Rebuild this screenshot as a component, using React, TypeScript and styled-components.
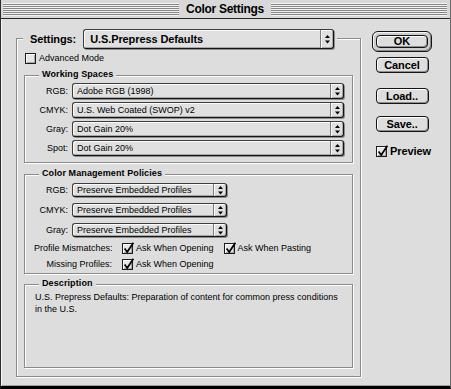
import React from "react";
import styled, { createGlobalStyle } from "styled-components";

const Global = createGlobalStyle`
  html, body { margin: 0; padding: 0; background: #dddddd; }
  body { font-family: "Liberation Sans", Arial, sans-serif; color: #000; }
  * { box-sizing: border-box; }
`;

const SANS = `"Liberation Sans", Arial, sans-serif`;

const Window = styled.div`
  width: 451px;
  height: 389px;
  background: #dddddd;
  border-left: 1px solid #2c2c2c;
  border-right: 1px solid #6a6a6a;
  border-bottom: 3px solid #000;
  box-shadow: inset 1px 0 0 #f8f8f8, inset 0 -1px 0 #a0a0a0;
  display: flex;
  flex-direction: column;
  overflow: hidden;
`;

const TitleBar = styled.div`
  height: 19px;
  flex: none;
  display: flex;
  align-items: center;
  padding: 0 3px 0 2px;
  border-bottom: 1px solid #262626;
  background: #d8d8d8;
`;

const Stripes = styled.div`
  flex: 1;
  height: 13px;
  background: repeating-linear-gradient(
    to bottom,
    #f4f4f4 0px,
    #f4f4f4 1px,
    #858585 1px,
    #858585 2px
  );
`;

const TitleText = styled.div`
  padding: 0 7px;
  font: bold 12px/14px ${SANS};
  letter-spacing: -0.3px;
`;

const Body = styled.div`
  flex: 1;
  display: flex;
  align-items: flex-start;
  padding: 12px 0 0 15px;
  gap: 11px;
`;

const SettingsBox = styled.div`
  width: 345px;
  height: 339px;
  margin-top: 7px;
  border: 1px solid #8a8a8a;
  box-shadow: inset 1px 1px 0 #ffffff, 1px 1px 0 #ffffff;
  padding: 0 7px 8px 7px;
  display: flex;
  flex-direction: column;
`;

const SettingsHeader = styled.div`
  align-self: flex-start;
  display: flex;
  align-items: center;
  gap: 7px;
  height: 20px;
  margin: -10px 0 0 -1px;
  padding: 0 3px 0 7px;
  background: #dddddd;
`;

const BigLabel = styled.span`
  font: bold 11px/13px ${SANS};
  letter-spacing: -0.1px;
  white-space: nowrap;
`;

const Popup = styled.div<{ $w?: number; $h: number }>`
  width: ${(p) => (p.$w ? `${p.$w}px` : "auto")};
  height: ${(p) => p.$h}px;
  display: flex;
  align-items: stretch;
  border: 1px solid #3c3c3c;
  border-right-color: #141414;
  border-bottom-color: #141414;
  border-radius: 3px;
  background: #e0e0e0;
  box-shadow: inset 1px 1px 0 #fbfbfb, inset -1px -1px 0 #a9a9a9,
    1px 1px 0 #8c8c8c;
`;

const PopupText = styled.div<{ $bold?: boolean }>`
  flex: 1;
  display: flex;
  align-items: center;
  padding-left: ${(p) => (p.$bold ? 6 : 4)}px;
  white-space: nowrap;
  overflow: hidden;
  font: ${(p) => (p.$bold ? `bold 11px/13px ${SANS}` : `9px/11px ${SANS}`)};
  letter-spacing: ${(p) => (p.$bold ? "-0.1px" : "0")};
`;

const PopupArrow = styled.div`
  width: 13px;
  flex: none;
  display: flex;
  align-items: center;
  justify-content: center;
  border-left: 1px solid #7c7c7c;
  box-shadow: inset 1px 0 0 #fafafa;
`;

const Arrows = () => (
  <svg width="5" height="9" viewBox="0 0 5 9">
    <path d="M2.5 0 L5 3 L0 3 Z M0 5.5 L5 5.5 L2.5 8.5 Z" fill="#000" />
  </svg>
);

const PopupMenu = ({
  text,
  w,
  h,
  bold,
}: {
  text: string;
  w?: number;
  h: number;
  bold?: boolean;
}) => (
  <Popup $w={w} $h={h}>
    <PopupText $bold={bold}>{text}</PopupText>
    <PopupArrow>
      <Arrows />
    </PopupArrow>
  </Popup>
);

const CheckRow = styled.div<{ $ml?: number; $mt?: number }>`
  display: flex;
  align-items: center;
  gap: 3px;
  margin-left: ${(p) => p.$ml ?? 0}px;
  margin-top: ${(p) => p.$mt ?? 0}px;
  height: 11px;
`;

const Box = styled.span`
  position: relative;
  width: 11px;
  height: 11px;
  flex: none;
  border: 1px solid #1c1c1c;
  background: #e6e6e6;
  box-shadow: inset 1px 1px 0 #ffffff, inset -1px -1px 0 #a6a6a6;
`;

const CheckGlyph = styled.svg`
  position: absolute;
  left: 0px;
  top: -2px;
  overflow: visible;
`;

const Check = ({ checked }: { checked?: boolean }) => (
  <Box>
    {checked && (
      <CheckGlyph width="11" height="12" viewBox="0 0 11 12">
        <path
          d="M1.6 6.6 L4.2 10 L10.4 0.8"
          fill="none"
          stroke="#000"
          strokeWidth="1.7"
        />
      </CheckGlyph>
    )}
  </Box>
);

const SmallText = styled.span`
  font: 9px/11px ${SANS};
  white-space: nowrap;
`;

const Group = styled.div<{ $mt: number; $pb: number; $grow?: boolean }>`
  margin-top: ${(p) => p.$mt}px;
  border: 1px solid #8a8a8a;
  box-shadow: inset 1px 1px 0 #ffffff, 1px 1px 0 #ffffff;
  padding: 0 8px ${(p) => p.$pb}px 9px;
  display: flex;
  flex-direction: column;
  ${(p) => (p.$grow ? "flex: 1;" : "")}
`;

const GroupTitle = styled.div`
  align-self: flex-start;
  margin: -7px 0 0 5px;
  padding: 0 3px;
  background: #dddddd;
  font: bold 9px/11px ${SANS};
  letter-spacing: 0.1px;
  white-space: nowrap;
`;

const Rows = styled.div<{ $gap: number; $mt: number }>`
  display: flex;
  flex-direction: column;
  gap: ${(p) => p.$gap}px;
  margin-top: ${(p) => p.$mt}px;
`;

const FieldRow = styled.div`
  display: grid;
  grid-template-columns: 34px auto 1fr;
  column-gap: 4px;
  align-items: center;
`;

const FieldLabel = styled.span`
  font: 9px/11px ${SANS};
  text-align: right;
  white-space: nowrap;
`;

const OptionRow = styled.div<{ $mt: number }>`
  display: grid;
  grid-template-columns: 78px auto auto 1fr;
  column-gap: 10px;
  align-items: center;
  margin-top: ${(p) => p.$mt}px;
`;

const DescText = styled.p`
  margin: 2px 0 0 1px;
  font: 9px/12px ${SANS};
  white-space: nowrap;
`;

const Side = styled.div`
  width: 60px;
  display: flex;
  flex-direction: column;
  align-items: center;
`;

const DefaultRing = styled.div`
  width: 60px;
  border: 1px solid #141414;
  border-radius: 6px;
  padding: 3px;
  background: #cccccc;
  box-shadow: inset 1px 1px 0 #f6f6f6, inset -1px -1px 0 #8a8a8a;
  display: flex;
`;

const Button = styled.div<{ $mt?: number; $h?: number; $full?: boolean }>`
  width: ${(p) => (p.$full ? "100%" : "53px")};
  height: ${(p) => p.$h ?? 16}px;
  margin-top: ${(p) => p.$mt ?? 0}px;
  border: 1px solid #141414;
  border-radius: 4px;
  background: #dedede;
  box-shadow: inset 1px 1px 0 #ffffff, inset -1px -1px 0 #8e8e8e;
  display: flex;
  align-items: center;
  justify-content: center;
  font: bold 11px/13px ${SANS};
  letter-spacing: -0.1px;
`;

const PreviewRow = styled.div`
  align-self: flex-start;
  margin: 14px 0 0 4px;
  display: flex;
  align-items: center;
  gap: 3px;
  height: 11px;
`;

export default function App() {
  return (
    <>
      <Global />
      <Window>
        <TitleBar>
          <Stripes />
          <TitleText>Color Settings</TitleText>
          <Stripes />
        </TitleBar>
        <Body>
          <SettingsBox>
            <SettingsHeader>
              <BigLabel>Settings:</BigLabel>
              <PopupMenu text="U.S.Prepress Defaults" w={251} h={20} bold />
            </SettingsHeader>

            <CheckRow $ml={1} $mt={4}>
              <Check />
              <SmallText>Advanced Mode</SmallText>
            </CheckRow>

            <Group $mt={11} $pb={6}>
              <GroupTitle>Working Spaces</GroupTitle>
              <Rows $gap={3} $mt={3}>
                {[
                  ["RGB:", "Adobe RGB (1998)"],
                  ["CMYK:", "U.S. Web Coated (SWOP) v2"],
                  ["Gray:", "Dot Gain 20%"],
                  ["Spot:", "Dot Gain 20%"],
                ].map(([l, v]) => (
                  <FieldRow key={l}>
                    <FieldLabel>{l}</FieldLabel>
                    <PopupMenu text={v} w={272} h={16} />
                  </FieldRow>
                ))}
              </Rows>
            </Group>

            <Group $mt={11} $pb={3}>
              <GroupTitle>Color Management Policies</GroupTitle>
              <Rows $gap={6} $mt={4}>
                {["RGB:", "CMYK:", "Gray:"].map((l) => (
                  <FieldRow key={l}>
                    <FieldLabel>{l}</FieldLabel>
                    <PopupMenu text="Preserve Embedded Profiles" w={155} h={14} />
                  </FieldRow>
                ))}
              </Rows>
              <OptionRow $mt={6}>
                <FieldLabel>Profile Mismatches:</FieldLabel>
                <CheckRow>
                  <Check checked />
                  <SmallText>Ask When Opening</SmallText>
                </CheckRow>
                <CheckRow>
                  <Check checked />
                  <SmallText>Ask When Pasting</SmallText>
                </CheckRow>
              </OptionRow>
              <OptionRow $mt={5}>
                <FieldLabel>Missing Profiles:</FieldLabel>
                <CheckRow>
                  <Check checked />
                  <SmallText>Ask When Opening</SmallText>
                </CheckRow>
              </OptionRow>
            </Group>

            <Group $mt={10} $pb={0} $grow>
              <GroupTitle>Description</GroupTitle>
              <DescText>
                U.S. Prepress Defaults: Preparation of content for common press
                conditions
                <br />
                in the U.S.
              </DescText>
            </Group>
          </SettingsBox>

          <Side>
            <DefaultRing>
              <Button $full $h={13}>OK</Button>
            </DefaultRing>
            <Button $mt={5}>Cancel</Button>
            <Button $mt={15}>Load..</Button>
            <Button $mt={12}>Save..</Button>
            <PreviewRow>
              <Check checked />
              <BigLabel>Preview</BigLabel>
            </PreviewRow>
          </Side>
        </Body>
      </Window>
    </>
  );
}
